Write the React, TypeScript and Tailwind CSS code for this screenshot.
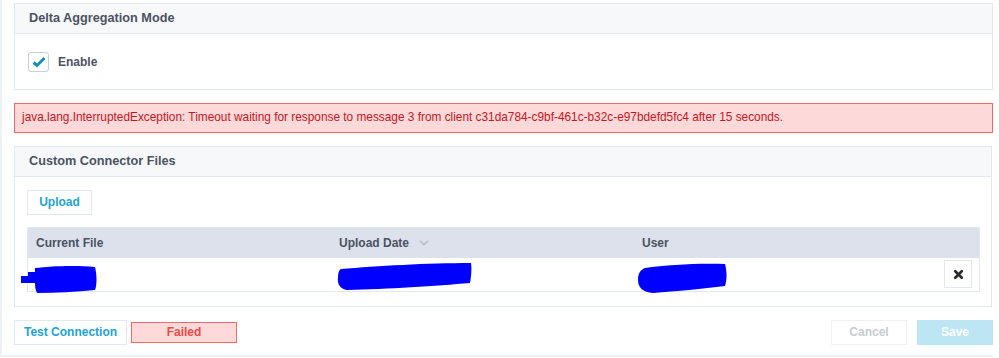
import { X, ChevronDown } from 'lucide-react';

function Scribble({ w, h, d }: { w: number; h: number; d: string }) {
  return (
    <svg width={w} height={h} viewBox={`0 0 ${w} ${h}`} className="block">
      <path d={d} fill="#0000ff" />
    </svg>
  );
}

export default function App() {
  return (
    <div className="bg-white w-[999px] h-[358px] font-['Liberation_Sans',Arial,sans-serif] text-[#4a5363]">
      <div className="w-[993px] h-[357px] border-l-2 border-b-2 border-[#eef1f6] pl-[12px] pt-[3px]">
        {/* Delta Aggregation Mode */}
        <div className="border border-[#e3e7ee]">
          <div className="h-[30px] bg-[#f7f8fa] border-b border-[#e3e7ee] flex items-center pl-[14px] text-[12.7px] font-bold">
            Delta Aggregation Mode
          </div>
          <div className="h-[55px] flex items-center pl-[13px] gap-[9px]">
            <span className="w-[21px] h-[20px] border border-[#c9ced8] rounded-[3px] flex items-center justify-center bg-white">
              <svg width="14" height="12" viewBox="0 0 14 12">
                <path d="M1.5 6.5 L5 9.5 L12.5 2" fill="none" stroke="#1b8fb6" strokeWidth="3" strokeLinejoin="miter" />
              </svg>
            </span>
            <span className="text-[12px] font-bold">Enable</span>
          </div>
        </div>

        {/* Error */}
        <div className="mt-[13px] h-[30px] bg-[#fdd9da] border border-[#f06a6b] flex items-center pl-[7px] text-[11.85px] text-[#c8161d]">
          java.lang.InterruptedException: Timeout waiting for response to message 3 from client c31da784-c9bf-461c-b32c-e97bdefd5fc4 after 15 seconds.
        </div>

        {/* Custom Connector Files */}
        <div className="mt-[13px] w-[978px] border border-[#e3e7ee]">
          <div className="h-[30px] bg-[#f7f8fa] border-b border-[#e3e7ee] flex items-center pl-[14px] text-[12.7px] font-bold">
            Custom Connector Files
          </div>
          <div className="pl-[12px] pr-[11px] pt-[12px] pb-[14px]">
            <button className="h-[25px] w-[65px] border border-[#e3e7ee] bg-white text-[12px] font-bold text-[#21a3d6]">
              Upload
            </button>
            <div className="mt-[12px] border border-[#e3e7ee]">
              <div className="h-[30px] bg-[#dde1ec] grid grid-cols-[303px_303px_1fr] items-center text-[12px] font-bold">
                <div className="pl-[8px]">Current File</div>
                <div className="pl-[8px] flex items-center gap-[8px]">
                  Upload Date
                  <ChevronDown size={14} strokeWidth={3} className="text-[#b8bcc6]" />
                </div>
                <div className="pl-[8px]">User</div>
              </div>
              <div className="h-[33px] bg-white grid grid-cols-[303px_303px_1fr] items-center">
                <div className="relative h-full">
                  <div className="absolute left-[-7px] top-[7px]">
                    <Scribble
                      w={78}
                      h={29}
                      d="M14 3 C30 1 55 0 74 2 C76 10 76 20 74 25 C55 27 35 28 16 28 C14 24 14 20 14 18 L0 18 L0 11 L7 11 L7 7 L14 7 Z"
                    />
                  </div>
                </div>
                <div className="relative h-full">
                  <div className="absolute left-[6px] top-[4px]">
                    <Scribble
                      w={136}
                      h={29}
                      d="M4 7 C40 4 90 1 134 1 C135 8 134 16 133 21 C100 24 50 27 10 28 C3 27 0 22 1 15 C1 11 2 8 4 7 Z"
                    />
                  </div>
                </div>
                <div className="relative h-full flex items-center justify-end pr-[7px]">
                  <div className="absolute left-[3px] top-[4px]">
                    <Scribble
                      w={91}
                      h={32}
                      d="M8 6 C30 3 60 1 88 2 C90 9 90 18 88 24 C65 27 40 29 16 31 C6 30 1 26 1 18 C1 12 3 8 8 6 Z"
                    />
                  </div>
                  <button className="w-[28px] h-[28px] border border-[#e3e7ee] bg-white flex items-center justify-center">
                    <X size={13} strokeWidth={5} className="text-[#2b2b2b]" />
                  </button>
                </div>
              </div>
            </div>
          </div>
        </div>

        {/* Footer buttons */}
        <div className="mt-[13px] flex items-center">
          <button className="h-[25px] w-[113px] border border-[#e3e7ee] bg-white text-[12px] font-bold text-[#21a3d6]">
            Test Connection
          </button>
          <div className="ml-[4px] h-[21px] w-[106px] bg-[#fdd9da] border border-[#f06a6b] flex items-center justify-center text-[12px] font-bold text-[#ef4a47]">
            Failed
          </div>
          <div className="flex-1" />
          <button className="h-[25px] w-[76px] border border-[#eff1f4] bg-white text-[12px] font-bold text-[#c9ccd3]">
            Cancel
          </button>
          <button className="ml-[10px] h-[25px] w-[76px] bg-[#bde6f5] text-[12px] font-bold text-white">
            Save
          </button>
        </div>
      </div>
    </div>
  );
}
